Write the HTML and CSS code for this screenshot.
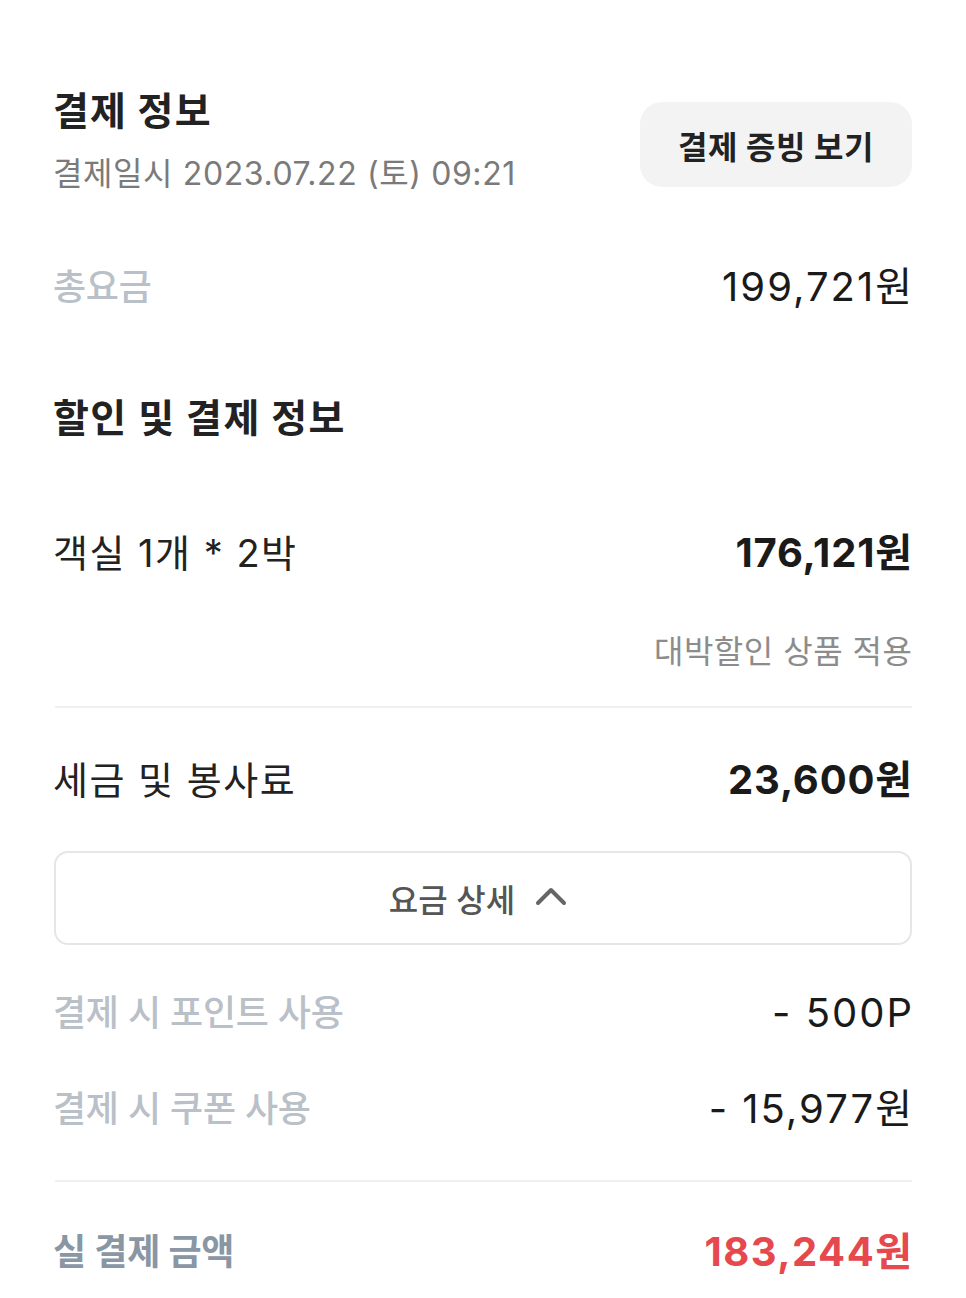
FILE: index.html
```html
<!DOCTYPE html>
<html lang="ko">
<head>
    <meta charset="UTF-8">
    <meta name="viewport" content="width=device-width, initial-scale=1.0">
    <title>결제 정보</title>
    <link rel="stylesheet" href="styles.css">
</head>
<body>
    <div class="page">
        <div class="header">
            <div class="header-text">
                <h1 class="title">결제 정보</h1>
                <div class="date">결제일시 2023.07.22 (토) 09:21</div>
            </div>
            <button class="receipt-btn">결제 증빙 보기</button>
        </div>

        <div class="row total-row">
            <span class="label muted">총요금</span>
            <span class="value">199,721원</span>
        </div>

        <h2 class="section-title">할인 및 결제 정보</h2>

        <div class="row room-row">
            <span class="label">객실 1개 * 2박</span>
            <span class="value bold">176,121원</span>
        </div>
        <div class="note">대박할인 상품 적용</div>

        <div class="divider first"></div>

        <div class="row tax-row">
            <span class="label">세금 및 봉사료</span>
            <span class="value bold">23,600원</span>
        </div>

        <button class="detail-toggle">
            <span class="toggle-text">요금 상세</span>
            <svg class="chevron" width="32" height="20" viewBox="0 0 32 20">
                <path d="M3 17 L16 4 L29 17" fill="none" stroke="#666" stroke-width="4" stroke-linecap="round" stroke-linejoin="round"/>
            </svg>
        </button>

        <div class="row point-row">
            <span class="label muted">결제 시 포인트 사용</span>
            <span class="value">- 500P</span>
        </div>
        <div class="row coupon-row">
            <span class="label muted">결제 시 쿠폰 사용</span>
            <span class="value">- 15,977원</span>
        </div>

        <div class="divider second"></div>

        <div class="row final-row">
            <span class="label final-label">실 결제 금액</span>
            <span class="value final-value">183,244원</span>
        </div>
    </div>
</body>
</html>
```

FILE: styles.css
```css
body {
    margin: 0;
    background: #ffffff;
    font-family: Inter, "Noto Sans CJK KR", sans-serif;
    color: #1c1c1c;
}

.page {
    padding: 0 54px 40px 53px;
}

.header {
    display: flex;
    justify-content: space-between;
    align-items: flex-start;
    margin-top: 88px;
}

.title {
    margin: 0;
    font-size: 39px;
    line-height: 46px;
    font-weight: 700;
    color: #222;
    letter-spacing: 1.2px;
}

.date {
    margin-top: 15px;
    font-size: 32px;
    line-height: 50px;
    color: #7a7a7a;
    letter-spacing: 0.6px;
}

.receipt-btn {
    margin-top: 14px;
    width: 272px;
    height: 85px;
    border: none;
    border-radius: 22px;
    background: #f3f3f4;
    font-family: inherit;
    font-size: 32px;
    font-weight: 700;
    color: #222;
    padding: 0;
    letter-spacing: 0.5px;
}

.row {
    display: flex;
    justify-content: space-between;
    align-items: center;
    height: 50px;
    font-size: 38px;
    line-height: 50px;
}

.label {
    color: #222;
    letter-spacing: 1.5px;
}

.label.muted {
    color: #b9c0c8;
    font-weight: 500;
    font-size: 36px;
    letter-spacing: -0.3px;
}

.value {
    font-size: 40px;
    color: #1a1a1a;
    letter-spacing: 2px;
    margin-right: -2px;
}

.value.bold {
    font-weight: 700;
    letter-spacing: 0.8px;
    margin-right: -0.8px;
}

.total-row {
    margin-top: 63px;
}

.section-title {
    margin: 81px 0 0;
    font-size: 39px;
    line-height: 50px;
    font-weight: 700;
    color: #222;
    letter-spacing: 1.4px;
}

.room-row {
    margin-top: 85px;
}

.note {
    margin-top: 52px;
    text-align: right;
    font-size: 32px;
    line-height: 44px;
    color: #8c8c8c;
    letter-spacing: 0.5px;
    margin-right: -0.5px;
}

.divider {
    height: 2px;
    margin-left: 2px;
    background: #f0f0f0;
}

.divider.first {
    margin-top: 32px;
}

.tax-row {
    margin-top: 47px;
}

.detail-toggle {
    margin-top: 46px;
    margin-left: 1px;
    width: calc(100% - 1px);
    height: 94px;
    border: 2px solid #e6e6e6;
    border-radius: 14px;
    background: #fff;
    font-family: inherit;
    font-size: 32px;
    font-weight: 500;
    color: #555;
    display: flex;
    align-items: center;
    justify-content: center;
    gap: 20px;
    padding: 0 10px 0 0;
}

.chevron {
    margin-top: -4px;
}

.point-row {
    margin-top: 43px;
}

.coupon-row {
    margin-top: 46px;
}

.divider.second {
    margin-top: 46px;
}

.final-row {
    margin-top: 45px;
}

.label.final-label {
    color: #8996a4;
    font-weight: 700;
    font-size: 36px;
    letter-spacing: -0.2px;
}

.value.final-value {
    color: #e5484d;
    font-weight: 700;
    letter-spacing: 1.5px;
    margin-right: -1.5px;
}
```
